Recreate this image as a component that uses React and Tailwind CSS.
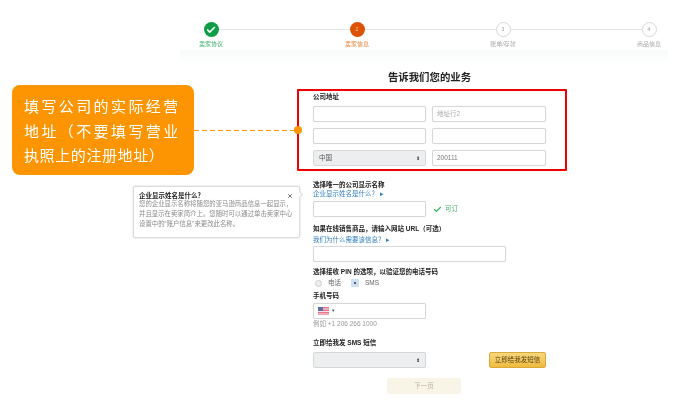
import { Check, X } from 'lucide-react';

const font = { fontFamily: '"Liberation Sans", "Noto Sans CJK SC", sans-serif' };

const steps = [
  { n: '1', label: '卖家协议', done: true },
  { n: '2', label: '卖家信息', active: true },
  { n: '3', label: '账单/存款' },
  { n: '4', label: '商品信息' },
];

function Step({ step }) {
  let circle = 'bg-white border border-[#d5d9d9] text-[#999]';
  let text = 'text-[#aaa]';
  if (step.done) {
    circle = 'bg-[#0f9d45] text-white';
    text = 'text-[#3fae6a]';
  }
  if (step.active) {
    circle = 'bg-[#dc5305] text-[#f7c9a8]';
    text = 'text-[#e0853f]';
  }
  return (
    <div className="relative z-10 flex w-[30px] flex-col items-center">
      <div className={`flex h-[15px] w-[15px] items-center justify-center rounded-full text-[5px] ${circle}`}>
        {step.done ? <Check size={10} strokeWidth={4} /> : step.n}
      </div>
      <div className={`mt-[3px] whitespace-nowrap text-[6px] leading-[8px] ${text}`}>{step.label}</div>
    </div>
  );
}

function Label({ children }) {
  return <div className="text-[6.5px] font-bold leading-[9px] text-[#222]">{children}</div>;
}

function HelpLink({ children }) {
  return <div className="text-[6.5px] leading-[9px] text-[#2f7fc1]">{children} ▸</div>;
}

function Input({ className = '', children }) {
  return (
    <div className={`flex h-[16px] items-center rounded-[2px] border border-[#d5d8d8] bg-white px-[4px] text-[6.5px] text-[#777] shadow-[0_0_1px_#ddd] ${className}`}>
      {children}
    </div>
  );
}

function Select({ className = '', children }) {
  return (
    <div className={`flex h-[16px] items-center justify-between rounded-[2px] border border-[#d5d8d8] bg-[#eceef0] px-[5px] text-[6.5px] text-[#555] ${className}`}>
      <span>{children}</span>
      <span className="text-[5px] leading-none text-[#444]">⬍</span>
    </div>
  );
}

function UsFlag() {
  return (
    <svg width="11" height="8" viewBox="0 0 11 8">
      <rect width="11" height="8" fill="#e8788a" />
      <rect y="1.5" width="11" height="1" fill="#f6dfe2" />
      <rect y="4" width="11" height="1" fill="#f6dfe2" />
      <rect y="6.5" width="11" height="1" fill="#f6dfe2" />
      <rect width="5" height="4" fill="#5a6fa8" />
    </svg>
  );
}

export default function App() {
  return (
    <div className="relative h-[405px] w-[686px] overflow-hidden bg-white blur-[0.4px]" style={font}>
      {/* Stepper */}
      <div className="relative ml-[196px] flex w-[468px] justify-between pt-[22px]">
        <div className="absolute left-[15px] right-[15px] top-[28.5px] h-[1.5px] bg-[#e3e5e5]" />
        {steps.map(s => (
          <Step key={s.n} step={s} />
        ))}
      </div>
      <div className="ml-[180px] mt-[2px] h-[14px] w-[488px] bg-gradient-to-b from-[#f8f9f9] to-white" />

      <h1 className="ml-[313px] mt-[7px] w-[233px] text-center text-[10.4px] font-bold leading-[14px] text-[#222]">
        告诉我们您的业务
      </h1>

      {/* Form */}
      <div className="ml-[313px] mt-[7px] flex w-[233px] flex-col">
        <Label>公司地址</Label>
        <div className="mt-[5px] grid grid-cols-[113px_114px] gap-x-[6px] gap-y-[6px]">
          <Input />
          <Input className="text-[#aaa]">地址行2</Input>
          <Input />
          <Input />
          <Select>中国</Select>
          <Input className="text-[#555]">200111</Input>
        </div>

        <div className="mt-[14px]">
          <Label>选择唯一的公司显示名称</Label>
          <HelpLink>企业显示姓名是什么？</HelpLink>
        </div>
        <div className="mt-[3px] flex items-center gap-[7px]">
          <Input className="w-[113px]" />
          <div className="flex items-center gap-[3px] text-[6.5px] text-[#3fae6a]">
            <Check size={9} strokeWidth={3} className="text-[#2fb35a]" />
            可订
          </div>
        </div>

        <div className="mt-[7px]">
          <Label>如果在线销售商品，请输入网站 URL（可选）</Label>
        </div>
        <div className="mt-[2px]">
          <HelpLink>我们为什么需要该信息？</HelpLink>
        </div>
        <Input className="mt-[2px] w-[193px]" />

        <div className="mt-[5px]">
          <Label>选择接收 PIN 的选项，以验证您的电话号码</Label>
        </div>
        <div className="mt-[2px] flex items-center text-[6.5px] leading-[10px] text-[#666]">
          <span className="ml-[2px] h-[7px] w-[7px] rounded-full border border-[#ccc] bg-[#eee]" />
          <span className="ml-[6px]">电话</span>
          <span className="ml-[10px] flex h-[8px] w-[8px] items-center justify-center rounded-[1px] bg-[#cfe0f5]">
            <span className="h-[2px] w-[2px] rounded-full bg-[#333]" />
          </span>
          <span className="ml-[6px]">SMS</span>
        </div>

        <div className="mt-[3px]">
          <Label>手机号码</Label>
        </div>
        <Input className="mt-[3px] w-[113px] gap-[3px]">
          <UsFlag />
          <span className="text-[5px] text-[#555]">▾</span>
        </Input>
        <div className="text-[6.5px] leading-[9px] text-[#999]">例如 +1 206 266 1000</div>

        <div className="mt-[10px]">
          <Label>立即给我发 SMS 短信</Label>
        </div>
        <div className="mt-[5px] flex items-center justify-between">
          <Select className="w-[113px]" />
          <button className="h-[16px] w-[57px] rounded-[2px] border border-[#d9a93a] bg-gradient-to-b from-[#f7d77c] to-[#efbb3c] text-[6.5px] text-[#5a4310]">
            立即给我发短信
          </button>
        </div>
        <button className="ml-[74px] mt-[10px] h-[16px] w-[74px] rounded-[2px] bg-[#f8f4e6] text-[6.5px] text-[#b5b0a0]">
          下一页
        </button>
      </div>

      {/* Red highlight over address block */}
      <div className="absolute left-[297px] top-[89px] h-[82px] w-[270px] rounded-[1px] border-2 border-[#f00000]" />

      {/* Callout */}
      <div className="absolute left-[12px] top-[85px] h-[90px] w-[182px] rounded-[8px] bg-[#fd9503] px-[12px] pt-[10px] text-[15px] leading-[24.5px] text-white">
        <div className="whitespace-nowrap tracking-[2.4px]">填写公司的实际经营</div>
        <div className="whitespace-nowrap tracking-[2.4px]">地址（不要填写营业</div>
        <div className="whitespace-nowrap tracking-[0.6px]">执照上的注册地址）</div>
      </div>
      <svg className="absolute left-[194px] top-[129px]" width="102" height="3" viewBox="0 0 102 3">
        <line x1="0" y1="1.5" x2="102" y2="1.5" stroke="#fd9503" strokeWidth="1.2" strokeDasharray="5 3" />
      </svg>
      <div className="absolute left-[294px] top-[126px] h-[8px] w-[8px] rounded-full bg-[#fd9503]" />

      {/* Tooltip */}
      <div className="absolute left-[133px] top-[186px] h-[52px] w-[167px] rounded-[2px] border border-[#dcdcdc] bg-white px-[5px] pt-[4px] shadow-[0_0_2px_#ccc]">
        <div className="flex items-center justify-between pr-[1px]">
          <span className="text-[6.5px] font-bold leading-[9px] text-[#222]">企业显示姓名是什么？</span>
          <X size={6} strokeWidth={3} className="text-[#444]" />
        </div>
        <div className="-mt-[1px] whitespace-nowrap text-[6.4px] leading-[10px] text-[#8a8a8a]">
          <div>您的企业显示名称将随您的亚马逊商品信息一起显示，</div>
          <div>并且显示在卖家简介上。您随时可以通过单击卖家中心</div>
          <div>设置中的“账户信息”来更改此名称。</div>
        </div>
        <div className="absolute right-[-3px] top-[5px] h-[5px] w-[5px] rotate-45 border-r border-t border-[#dcdcdc] bg-white" />
      </div>
    </div>
  );
}
